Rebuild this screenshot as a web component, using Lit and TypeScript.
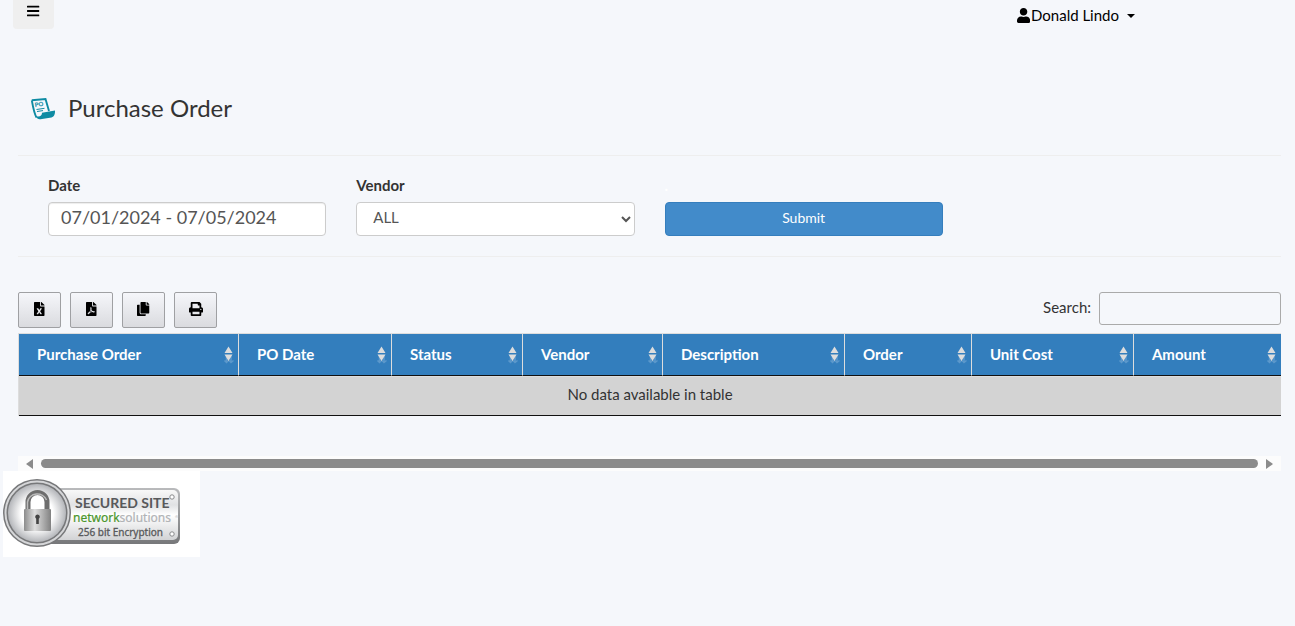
import { LitElement, html, css, svg } from "lit";
import { customElement, state } from "lit/decorators.js";

const ICONS: Record<string, { width: number; path: string }> = {
  bars: {
    width: 448,
    path: "M16 132h416c8.837 0 16-7.163 16-16V76c0-8.837-7.163-16-16-16H16C7.163 60 0 67.163 0 76v40c0 8.837 7.163 16 16 16zm0 160h416c8.837 0 16-7.163 16-16v-40c0-8.837-7.163-16-16-16H16c-8.837 0-16 7.163-16 16v40c0 8.837 7.163 16 16 16zm0 160h416c8.837 0 16-7.163 16-16v-40c0-8.837-7.163-16-16-16H16c-8.837 0-16 7.163-16 16v40c0 8.837 7.163 16 16 16z",
  },
  user: {
    width: 448,
    path: "M224 256c70.7 0 128-57.3 128-128S294.7 0 224 0 96 57.3 96 128s57.3 128 128 128zm89.6 32h-16.7c-22.2 10.2-46.9 16-72.9 16s-50.6-5.8-72.9-16h-16.7C60.2 288 0 348.2 0 422.4V464c0 26.5 21.5 48 48 48h352c26.5 0 48-21.5 48-48v-41.6c0-74.2-60.2-134.4-134.4-134.4z",
  },
  excel: {
    width: 384,
    path: "M224 136V0H24C10.7 0 0 10.7 0 24v464c0 13.3 10.7 24 24 24h336c13.3 0 24-10.7 24-24V160H248c-13.2 0-24-10.8-24-24zm60.1 106.5L224 336l60.1 93.5c5.1 8-.6 18.5-10.1 18.5h-34.9c-4.4 0-8.5-2.4-10.6-6.3C208.9 405.5 192 373 192 373c-6.4 14.8-10 20-36.6 68.8-2.1 3.9-6.1 6.3-10.5 6.3H110c-9.5 0-15.2-10.5-10.1-18.5l60.3-93.5-60.3-93.5c-5.2-8 .6-18.5 10.1-18.5h34.8c4.4 0 8.5 2.4 10.6 6.3 26.1 48.8 20 33.6 36.6 68.5 0 0 6.1-11.7 36.6-68.5 2.1-3.9 6.2-6.3 10.6-6.3H274c9.5-.1 15.2 10.4 10.1 18.4zM384 121.9v6.1H256V0h6.1c6.4 0 12.5 2.5 17 7l97.9 98c4.5 4.5 7 10.6 7 16.9z",
  },
  pdf: {
    width: 384,
    path: "M181.9 256.1c-5-16-4.9-46.9-2-46.9 8.4 0 7.6 36.9 2 46.9zm-1.7 47.2c-7.7 20.2-17.3 43.3-28.4 62.7 18.3-7 39-17.2 62.9-21.9-12.7-9.6-24.9-23.4-34.5-40.8zM86.1 428.1c0 .8 13.2-5.4 34.9-40.2-6.7 6.3-29.1 24.5-34.9 40.2zM248 160h136v328c0 13.3-10.7 24-24 24H24c-13.3 0-24-10.7-24-24V24C0 10.7 10.7 0 24 0h200v136c0 13.2 10.8 24 24 24zm-8 171.8c-20-12.2-33.3-29-42.7-53.8 4.5-18.5 11.6-46.6 6.2-64.2-4.7-29.4-42.4-26.5-47.8-6.8-5 18.3-.4 44.1 8.1 77-11.6 27.6-28.7 64.6-40.8 85.8-.1 0-.1.1-.2.1-27.1 13.9-73.6 44.5-54.5 68 5.6 6.9 16 10 21.5 10 17.9 0 35.7-18 61.1-61.8 25.8-8.5 54.1-19.1 79-23.2 21.7 11.8 47.1 19.5 64 19.5 29.2 0 31.2-32 19.7-43.4-13.9-13.6-54.3-9.7-73.6-7.2zM377 105L279 7c-4.5-4.5-10.6-7-17-7h-6v128h128v-6.1c0-6.3-2.5-12.4-7-16.9zm-74.1 255.3c4.1-2.7-2.5-11.9-42.8-9 37.1 15.8 42.8 9 42.8 9z",
  },
  copy: {
    width: 448,
    path: "M320 448v40c0 13.255-10.745 24-24 24H24c-13.255 0-24-10.745-24-24V120c0-13.255 10.745-24 24-24h72v296c0 30.879 25.121 56 56 56h168zm0-344V0H152c-13.255 0-24 10.745-24 24v368c0 13.255 10.745 24 24 24h272c13.255 0 24-10.745 24-24V128H344c-13.2 0-24-10.8-24-24zm120.971-31.029L375.029 7.029A24 24 0 0 0 358.059 0H352v96h96v-6.059a24 24 0 0 0-7.029-16.97z",
  },
  print: {
    width: 512,
    path: "M448 192V77.25c0-8.49-3.37-16.62-9.37-22.63L393.37 9.37c-6-6-14.14-9.37-22.63-9.37H96C78.33 0 64 14.33 64 32v160c-35.35 0-64 28.65-64 64v112c0 8.84 7.16 16 16 16h48v96c0 17.67 14.33 32 32 32h320c17.67 0 32-14.33 32-32v-96h48c8.84 0 16-7.16 16-16V256c0-35.35-28.65-64-64-64zm-64 256H128v-96h256v96zm0-224H128V64h192v48c0 8.84 7.16 16 16 16h48v96zm48 72c-13.25 0-24-10.75-24-24 0-13.26 10.75-24 24-24s24 10.74 24 24c0 13.25-10.75 24-24 24z",
  },
};

const icon = (name: string) => html`<svg
  class="icon"
  viewBox="0 0 ${ICONS[name].width} 512"
  aria-hidden="true"
>
  ${svg`<path d=${ICONS[name].path} />`}
</svg>`;

const EXPORTS = [
  { icon: "excel", label: "Excel" },
  { icon: "pdf", label: "PDF" },
  { icon: "copy", label: "Copy" },
  { icon: "print", label: "Print" },
];

/* Column weights are relative shares of the table width. */
const COLUMNS = [
  { title: "Purchase Order", share: 220 },
  { title: "PO Date", share: 153 },
  { title: "Status", share: 131 },
  { title: "Vendor", share: 140 },
  { title: "Description", share: 182 },
  { title: "Order", share: 127 },
  { title: "Unit Cost", share: 162 },
  { title: "Amount", share: 147 },
];
const TOTAL = COLUMNS.reduce((sum, c) => sum + c.share, 0);

@customElement("app-root")
export class AppRoot extends LitElement {
  @state() private range = "07/01/2024 - 07/05/2024";

  static styles = css`
    :host {
      display: block;
      min-height: 100vh;
      background: #f5f7fb;
      color: #333;
      font: 15px/20px Lato, "Open Sans", sans-serif;
    }
    * {
      box-sizing: border-box;
    }
    button,
    input,
    select {
      font: inherit;
      color: inherit;
    }
    .icon {
      display: block;
      height: 14px;
      fill: #000;
    }
    .topbar {
      display: flex;
      justify-content: space-between;
      align-items: flex-start;
      padding: 0 160px 0 13px;
    }
    .menu {
      display: flex;
      justify-content: center;
      width: 41px;
      height: 29px;
      padding: 4px 0 0;
      border: 0;
      border-radius: 0 0 4px 4px;
      background: #efefef;
    }
    .account {
      display: flex;
      align-items: center;
      margin-top: 5px;
      color: #000;
      text-decoration: none;
    }
    .account .icon {
      height: 15px;
      margin-right: 1px;
    }
    .caret {
      margin: 2px 0 0 8px;
      border: 4px solid transparent;
      border-top-color: #000;
      border-bottom: 0;
    }
    main {
      padding: 0 14px 0 18px;
    }
    .title {
      display: flex;
      align-items: center;
      gap: 12px;
      padding: 61px 0 29px 12px;
    }
    .title svg {
      display: block;
      width: 26px;
      height: 22px;
      margin-top: 2px;
    }
    h1 {
      margin: 0;
      font-size: 24px;
      line-height: 36px;
      font-weight: 400;
    }
    .filters {
      display: grid;
      grid-template-columns: repeat(4, 1fr);
      gap: 30px;
      padding: 19px 30px 20px;
      border: solid #eee;
      border-width: 1px 0;
    }
    .field {
      display: flex;
      flex-direction: column;
      gap: 7px;
    }
    .field label {
      font-weight: 700;
    }
    .field .spacer {
      color: #fff;
    }
    .control {
      width: 100%;
      height: 34px;
      border: 1px solid #ccc;
      border-radius: 4px;
      background: #fff;
      color: #555;
      box-shadow: inset 0 1px 1px rgba(0, 0, 0, 0.075);
    }
    .date {
      padding: 0 12px 4px;
      font-size: 18px;
    }
    .vendor {
      padding: 0 12px 4px;
      box-shadow: none;
    }
    .submit {
      height: 34px;
      padding: 0 12px 2px;
      border: 1px solid #357ebd;
      border-radius: 4px;
      background: #428bca;
      color: #fff;
      font-size: 14px;
    }
    .tools {
      display: flex;
      justify-content: space-between;
      padding: 35px 0 5px;
    }
    .exports {
      display: flex;
      gap: 9px;
    }
    .export {
      display: flex;
      align-items: center;
      justify-content: center;
      width: 43px;
      height: 36px;
      padding: 0 0 2px;
      border: 1px solid #9fa0a3;
      border-radius: 2px;
      background: linear-gradient(#f5f6fa, #dadbdf);
    }
    .search {
      display: flex;
      align-items: center;
      gap: 8px;
      height: 33px;
    }
    .search label {
      padding-bottom: 3px;
    }
    .search input {
      width: 182px;
      height: 33px;
      padding: 5px;
      border: 1px solid #aaa;
      border-radius: 3px;
      background: transparent;
    }
    table {
      width: 100%;
      table-layout: fixed;
      border-collapse: separate;
      border-spacing: 0;
      border: solid #ddd;
      border-width: 1px 0 0 1px;
    }
    th {
      height: 42px;
      padding: 0 4px 0 18px;
      border-right: 1px solid #ddd;
      border-bottom: 1px solid #111;
      background: #337ebd;
      color: #fff;
      text-align: left;
    }
    th:last-child {
      border-right: 0;
    }
    .head {
      display: flex;
      align-items: center;
      justify-content: space-between;
      padding-bottom: 2px;
    }
    .head svg {
      width: 11px;
      height: 18px;
      margin-top: 3px;
    }
    td {
      height: 40px;
      padding: 0 0 4px;
      border-top: 1px solid #ddd;
      border-bottom: 1px solid #111;
      background: #d3d3d3;
      text-align: center;
    }
    .scrollbar {
      display: flex;
      align-items: center;
      gap: 7px;
      height: 15px;
      margin-top: 40px;
      padding: 0 8px;
      background: #fcfcfc;
    }
    .thumb {
      flex: 1;
      height: 9px;
      border-radius: 5px;
      background: #8b8b8b;
    }
    .arrow {
      width: 8px;
      height: 10px;
      fill: #8b8b8b;
    }
    .seal {
      display: block;
      width: 197px;
      margin-left: 3px;
      background: #fff;
    }
    .seal svg {
      display: block;
    }
  `;

  private sortMark() {
    return html`<svg viewBox="0 0 11 18" aria-hidden="true">
      <g fill="none" stroke="#5c98cb" stroke-width="1.5">
        <path d="M3.500 10v6M1.500 14.500l2 2 2-2M8 10v6M6 14.500l2 2 2.500-2" />
      </g>
      <path d="M5.500 0.500l4 6.500h-8zM5.500 15l4-6.500h-8z" fill="#ddd" />
    </svg>`;
  }

  private poMark() {
    return html`<svg viewBox="0 0 26 22" aria-hidden="true">
      <path
        d="M1.800 2.300L15.500 1 19 13M1.800 2.300C3 9 4 15 6.500 19.500"
        fill="none"
        stroke="#0e8ba3"
        stroke-width="1.900"
      />
      <path
        d="M5.500 18C7.500 21.800 9 21.400 12 21L21.500 19.500C24.500 18.500 25.200 15.500 25 12.500L12 14.800C12.300 17.500 9 19.500 6.500 18z"
        fill="#0e8ba3"
      />
      <text x="5" y="9" font-size="6" font-weight="900" fill="#0e8ba3" transform="rotate(-7 5 9)">PO</text>
      <path d="M6.500 11.500l8-1.200M7 13.500l6-.9" stroke="#0e8ba3" />
    </svg>`;
  }

  private seal() {
    return html`<svg width="197" height="86" viewBox="0 0 197 86" role="img" aria-label="Secured site seal">
      <defs>
        <linearGradient id="plate" x1="0" y1="0" x2="0" y2="1">
          <stop offset="0" stop-color="#f8f8f8" />
          <stop offset=".3" stop-color="#e1e2e4" />
          <stop offset=".5" stop-color="#fff" />
          <stop offset="1" stop-color="#d2d3d5" />
        </linearGradient>
        <linearGradient id="edge" x1="0" y1="0" x2="0" y2="1">
          <stop offset="0" stop-color="#b9babc" />
          <stop offset="1" stop-color="#77787a" />
        </linearGradient>
        <radialGradient id="disc">
          <stop offset=".55" stop-color="#fff" />
          <stop offset="1" stop-color="#b4b6ba" />
        </radialGradient>
        <linearGradient id="metal">
          <stop offset="0" stop-color="#8c8c8c" />
          <stop offset=".4" stop-color="#dedede" />
          <stop offset="1" stop-color="#818181" />
        </linearGradient>
      </defs>
      <rect x="40" y="17" width="137" height="56" rx="6" fill="url(#edge)" />
      <rect x="40" y="19" width="135" height="50" rx="5" fill="url(#plate)" />
      <circle cx="34" cy="42" r="34" fill="#77787a" />
      <circle cx="34" cy="42" r="31.500" fill="none" stroke="#d5d6d8" stroke-width="2" />
      <circle cx="34" cy="42" r="29" fill="url(#disc)" />
      <path d="M25 39V31a9.500 9.500 0 0 1 19 0v8" fill="none" stroke="#6e6e6e" stroke-width="5" />
      <path d="M24.500 39V31a10 10 0 0 1 19 -2" fill="none" stroke="#bbb" stroke-width="1.500" />
      <rect x="21" y="38" width="27" height="22" rx="1" fill="url(#metal)" />
      <path d="M34.500 43.500a2.300 2.300 0 0 1 1.300 4.200V53h-2.600v-5.300a2.300 2.300 0 0 1 1.300-4.200z" fill="#444" />
      <g fill="#fff" stroke="#88898b">
        <circle cx="169" cy="26" r="2.200" />
        <circle cx="169" cy="63" r="2.200" />
      </g>
      <g font-family="Noto Sans, sans-serif">
        <text x="72" y="37" font-size="14" font-weight="700" font-family="Lato" fill="#58595b">SECURED SITE</text>
        <text x="70" y="51" font-size="12" fill="#4b962c" stroke="#4b962c" stroke-width=".2">network<tspan fill="#b1b3b6" stroke="#b1b3b6">solutions</tspan></text>
        <text x="172" y="47" font-size="4" fill="#b1b3b6">®</text>
        <text x="75" y="65" font-size="10" fill="#58595b" stroke="#58595b" stroke-width=".3">256 bit Encryption</text>
      </g>
    </svg>`;
  }

  render() {
    return html`
      <header class="topbar">
        <button class="menu" aria-label="Toggle menu">${icon("bars")}</button>
        <a class="account" href="#">${icon("user")}Donald Lindo<span class="caret"></span></a>
      </header>
      <main>
        <div class="title">
          ${this.poMark()}
          <h1>Purchase Order</h1>
        </div>
        <form class="filters" @submit=${(e: Event) => e.preventDefault()}>
          <div class="field">
            <label for="range">Date</label>
            <input
              id="range"
              class="control date"
              type="text"
              .value=${this.range}
              @input=${(e: Event) => (this.range = (e.target as HTMLInputElement).value)}
            />
          </div>
          <div class="field">
            <label for="vendor">Vendor</label>
            <select id="vendor" class="control vendor">
              <option>ALL</option>
            </select>
          </div>
          <div class="field">
            <label class="spacer" for="submit">.</label>
            <button id="submit" class="submit" type="submit">Submit</button>
          </div>
        </form>
        <div class="tools">
          <div class="exports">
            ${EXPORTS.map(
              (e) => html`<button class="export" aria-label=${e.label}>${icon(e.icon)}</button>`
            )}
          </div>
          <div class="search">
            <label for="search">Search:</label>
            <input id="search" type="search" />
          </div>
        </div>
        <table>
          <colgroup>
            ${COLUMNS.map((c) => html`<col style="width:${(c.share / TOTAL) * 100}%" />`)}
          </colgroup>
          <thead>
            <tr>
              ${COLUMNS.map(
                (c) => html`<th scope="col"><div class="head">${c.title}${this.sortMark()}</div></th>`
              )}
            </tr>
          </thead>
          <tbody>
            <tr>
              <td colspan="8">No data available in table</td>
            </tr>
          </tbody>
        </table>
        <div class="scrollbar">
          <svg class="arrow" viewBox="0 0 8 10" aria-hidden="true"><path d="M7 0v10L0 5z" /></svg>
          <div class="thumb"></div>
          <svg class="arrow" viewBox="0 0 8 10" aria-hidden="true"><path d="M1 0v10l7-5z" /></svg>
        </div>
      </main>
      <a class="seal" href="#">${this.seal()}</a>
    `;
  }
}
